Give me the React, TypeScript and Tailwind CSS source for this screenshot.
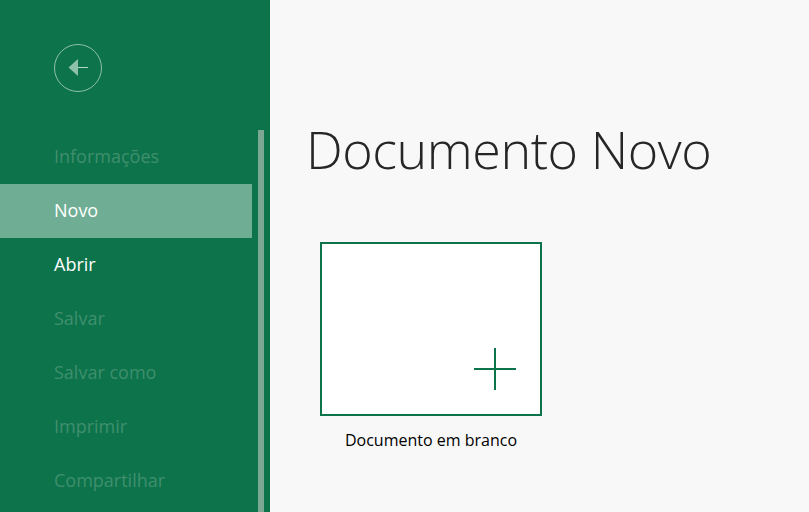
const NAV = [
  { label: "Informações", state: "disabled" },
  { label: "Novo", state: "active" },
  { label: "Abrir", state: "normal" },
  { label: "Salvar", state: "disabled" },
  { label: "Salvar como", state: "disabled" },
  { label: "Imprimir", state: "disabled" },
  { label: "Compartilhar", state: "disabled" },
];

const STATE_CLASS: Record<string, string> = {
  disabled: "text-[#3f8f6d]",
  active: "bg-[#6fae94] text-white",
  normal: "text-white",
};

function BackButton() {
  return (
    <svg width="48" height="48" viewBox="0 0 48 48" fill="none">
      <circle cx="24" cy="24" r="23.5" stroke="#8fc0aa" strokeWidth="1" />
      <path d="M14.5 23.5 L24 15 V32 Z" fill="#8fc0aa" />
      <path d="M24 23.5 H34" stroke="#b5d6c8" strokeWidth="1" />
    </svg>
  );
}

export default function App() {
  return (
    <div className="flex h-[512px] w-[809px] overflow-hidden bg-[#f8f8f8] font-['Open_Sans','Noto_Sans',sans-serif]">
      <aside className="flex w-[270px] shrink-0 bg-[#0d734b]">
        <div className="w-[252px] shrink-0">
          <div className="h-[130px] pl-[54px] pt-[44px]">
            <BackButton />
          </div>
          <nav>
            {NAV.map((item) => (
              <div
                key={item.label}
                className={`flex h-[54px] items-center pb-[2px] pl-[54px] text-[18px] ${STATE_CLASS[item.state]}`}
              >
                {item.label}
              </div>
            ))}
          </nav>
        </div>
        <div className="ml-[6px] mt-[130px] w-[6px] bg-[#7ba794]" />
      </aside>

      <main className="flex-1">
        <h1 className="ml-[36px] mt-[110px] text-[52px] leading-[78px] font-light tracking-[-0.45px] text-[#262626]">
          Documento Novo
        </h1>
        <div className="ml-[50px] mt-[54px] w-[222px]">
          <div className="flex h-[174px] items-end justify-end border-2 border-[#0d734b] bg-white pb-[24px] pr-[24px]">
            <svg width="42" height="42" viewBox="0 0 42 42">
              <path d="M0 21 H42 M21 0 V42" stroke="#0d734b" strokeWidth="2" />
            </svg>
          </div>
          <p className="mt-[14px] text-center text-[16px] leading-[20px] text-black">
            Documento em branco
          </p>
        </div>
      </main>
    </div>
  );
}
